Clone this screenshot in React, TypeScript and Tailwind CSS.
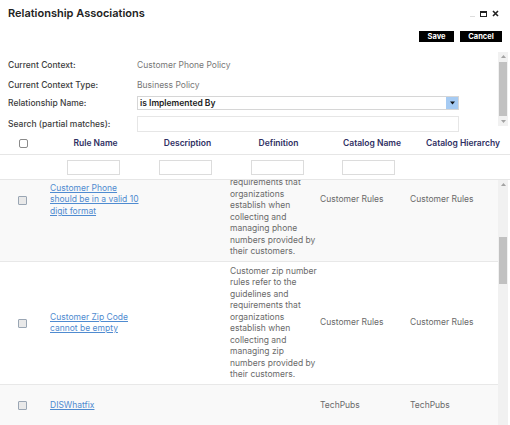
import { useEffect, useRef } from "react";

type Row = {
  id: string;
  name: string[];
  definition: string[];
  catalog: string;
  hierarchy: string;
  shaded: boolean;
  height?: string;
};

const rows: Row[] = [
  {
    id: "phone",
    name: ["Customer Phone", "should be in a valid 10", "digit format"],
    definition: [
      "Customer phone",
      "number rules refer to",
      "the guidelines and",
      "requirements that",
      "organizations",
      "establish when",
      "collecting and",
      "managing phone",
      "numbers provided by",
      "their customers.",
    ],
    catalog: "Customer Rules",
    hierarchy: "Customer Rules",
    shaded: true,
  },
  {
    id: "zip",
    name: ["Customer Zip Code", "cannot be empty"],
    definition: [
      "Customer zip number",
      "rules refer to the",
      "guidelines and",
      "requirements that",
      "organizations",
      "establish when",
      "collecting and",
      "managing zip",
      "numbers provided by",
      "their customers.",
    ],
    catalog: "Customer Rules",
    hierarchy: "Customer Rules",
    shaded: false,
  },
  {
    id: "dis",
    name: ["DISWhatfix"],
    definition: [],
    catalog: "TechPubs",
    hierarchy: "TechPubs",
    shaded: true,
    height: "h-[42px]",
  },
];

function Scrollbar({ thumbTop, thumbHeight, down }: { thumbTop: string; thumbHeight: string; down: boolean }) {
  return (
    <div className="flex w-[10px] flex-col items-center bg-[#f1f1f1]">
      <div className="flex h-[9px] w-full items-center justify-center">
        <svg width="5" height="3" viewBox="0 0 5 3">
          <path d="M0 3 L2.5 0 L5 3 Z" fill="#a3a3a3" />
        </svg>
      </div>
      <div className={`${thumbTop} ${thumbHeight} w-[8px] bg-[#c1c1c1]`} />
      <div className="flex-1" />
      {down && (
        <div className="flex h-[10px] w-full items-center justify-center">
          <svg width="5" height="3" viewBox="0 0 5 3">
            <path d="M0 0 L2.5 3 L5 0 Z" fill="#a3a3a3" />
          </svg>
        </div>
      )}
    </div>
  );
}

function Check({ header }: { header?: boolean }) {
  return header ? (
    <span className="block h-[9px] w-[9px] rounded-[2px] border border-[#8a8a8a] bg-white" />
  ) : (
    <span className="block h-[9px] w-[9px] rounded-[1px] border border-[#9aa6b4] bg-[#e9e9e9]" />
  );
}

export default function App() {
  const bodyRef = useRef<HTMLDivElement>(null);

  useEffect(() => {
    if (bodyRef.current) bodyRef.current.scrollTop = 41;
  }, []);

  return (
    <div className="flex h-[425px] w-[510px] flex-col overflow-hidden bg-white font-['Inter',sans-serif] text-[#333]">
      {/* title bar */}
      <div className="flex h-[50px] flex-col px-[8px]">
        <div className="flex h-[27px] items-center justify-between">
          <h1 className="text-[11px] font-semibold text-[#222]">Relationship Associations</h1>
          <div className="flex items-center gap-[5px] pr-[3px]">
            <span className="mt-[5px] block h-[1px] w-[5px] bg-[#ddd]" />
            <span className="block h-[6px] w-[7px] border border-t-2 border-[#222]" />
            <svg width="7" height="7" viewBox="0 0 7 7">
              <path d="M1 1 L6 6 M6 1 L1 6" stroke="#222" strokeWidth="1.6" />
            </svg>
          </div>
        </div>
        <div className="mt-[4px] flex justify-end gap-[6px]">
          <button className="h-[11px] w-[35px] bg-black text-[7.5px] font-bold leading-[11px] text-white">Save</button>
          <button className="h-[11px] w-[42px] bg-black text-[7.5px] font-bold leading-[11px] text-white">Cancel</button>
        </div>
      </div>

      {/* form */}
      <div className="flex h-[82px] pr-[2px]">
        <div className="flex-1 overflow-hidden pl-[8px] pt-[5px] text-[8.5px]">
          <div className="flex h-[20px] items-center">
            <span className="w-[129px] font-medium text-[#3c3c3c]">Current Context:</span>
            <span className="text-[#777]">Customer Phone Policy</span>
          </div>
          <div className="flex h-[20px] items-center">
            <span className="w-[129px] font-medium text-[#3c3c3c]">Current Context Type:</span>
            <span className="text-[#777]">Business Policy</span>
          </div>
          <div className="flex h-[16px] items-center">
            <span className="w-[129px] font-medium text-[#3c3c3c]">Relationship Name:</span>
            <div className="flex h-[14px] w-[322px] items-center justify-between border border-[#d6d6d6] bg-white">
              <span className="pl-[2px] font-semibold text-[#222]">is Implemented By</span>
              <span className="flex h-[12px] w-[12px] items-center justify-center bg-[#a6cbf3]">
                <svg width="5" height="4" viewBox="0 0 5 4">
                  <path d="M0 0.5 L5 0.5 L2.5 3.5 Z" fill="#111" />
                </svg>
              </span>
            </div>
          </div>
          <div className="mt-[5px] flex h-[16px] items-center">
            <span className="w-[129px] font-medium text-[#3c3c3c]">Search (partial matches):</span>
            <div className="h-[16px] w-[322px] border border-[#e6e6e6] bg-white" />
          </div>
        </div>
        <div className="py-[2px]">
          <Scrollbar thumbTop="mt-[1px]" thumbHeight="h-[54px]" down />
        </div>
      </div>

      {/* table header */}
      <div className="flex h-[23px] items-center border-b border-[#e6e6e6] pr-[2px] text-[8.5px] font-semibold text-[#2f2f63]">
        <div className="flex w-[47px] justify-center">
          <Check header />
        </div>
        <div className="w-[97px] text-center">Rule Name</div>
        <div className="w-[87px] text-center">Description</div>
        <div className="w-[95px] text-center">Definition</div>
        <div className="w-[92px] text-center">Catalog Name</div>
        <div className="flex-1 text-center">Catalog Hierarchy</div>
      </div>
      <div className="flex h-[25px] items-center border-b border-[#e6e6e6]">
        <div className="w-[67px]" />
        <div className="h-[15px] w-[53px] border border-[#dcdcdc]" />
        <div className="w-[39px]" />
        <div className="h-[15px] w-[53px] border border-[#dcdcdc]" />
        <div className="w-[39px]" />
        <div className="h-[15px] w-[53px] border border-[#dcdcdc]" />
        <div className="w-[38px]" />
        <div className="h-[15px] w-[53px] border border-[#dcdcdc]" />
      </div>

      {/* table body */}
      <div className="flex min-h-0 flex-1 pr-[2px]">
        <div ref={bodyRef} className="min-w-0 flex-1 overflow-hidden text-[8.5px] leading-[11.5px]">
          {rows.map((row) => (
            <div
              key={row.id}
              className={`flex ${row.height ?? ""} items-center border-b border-[#e8e8e8] py-[3.5px] ${row.shaded ? "bg-[#f9f9f9]" : "bg-white"}`}
            >
              <div className="flex w-[45px] shrink-0 justify-center">
                <Check />
              </div>
              <div className="w-[95px] shrink-0 pl-[5px]">
                <a href="#" className="text-[#4f8bd0] underline">
                  {row.name.map((line) => (
                    <span key={line} className="block whitespace-nowrap">
                      {line}
                    </span>
                  ))}
                </a>
              </div>
              <div className="w-[85px] shrink-0" />
              <div className="w-[95px] shrink-0 pl-[5px] text-[#6a6a6a]">
                {row.definition.map((line) => (
                  <span key={line} className="block whitespace-nowrap">
                    {line}
                  </span>
                ))}
              </div>
              <div className="w-[90px] shrink-0 text-[#6a6a6a]">{row.catalog}</div>
              <div className="flex-1 text-[#6a6a6a]">{row.hierarchy}</div>
            </div>
          ))}
        </div>
        <Scrollbar thumbTop="mt-[48px]" thumbHeight="h-[47px]" down={false} />
      </div>
    </div>
  );
}
